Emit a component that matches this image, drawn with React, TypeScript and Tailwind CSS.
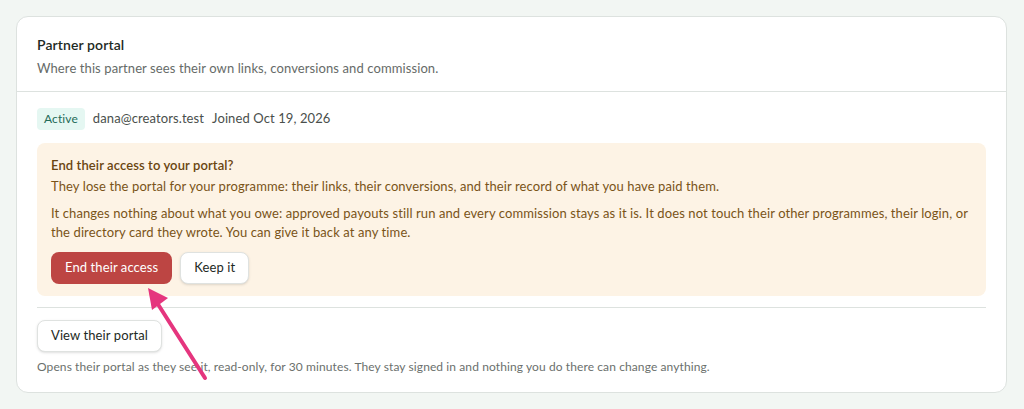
export default function App() {
  return (
    <div className="relative min-h-[409px] bg-[#f2f6f3] pt-[16px] pb-[16px] pl-[16px] pr-[17px] font-['Lato','Noto_Sans',sans-serif] tracking-[0.1px]">
      <div className="rounded-xl border border-[#dde2df] bg-white">
        {/* Header */}
        <div className="border-b border-[#dde2df] px-5 pt-[18px] pb-[14px]">
          <h2 className="text-[14px] font-semibold leading-[20px] text-[#1e2a24]">Partner portal</h2>
          <p className="mt-[4px] text-[13px] leading-[18px] text-[#666b68]">
            Where this partner sees their own links, conversions and commission.
          </p>
        </div>

        {/* Body */}
        <div className="px-5 pt-4 pb-[17px]">
          <div className="flex items-center text-[13px] text-[#4a4f4c]">
            <span className="rounded-[4px] bg-[#e5f7f2] px-[7px] py-[3px] text-[12px] leading-[16px] text-[#1f6b58]">
              Active
            </span>
            <span className="ml-[8px]">dana@creators.test</span>
            <span className="ml-[8px]">Joined Oct 19, 2026</span>
          </div>

          <div className="mt-[13px] rounded-lg bg-[#fdf3e5] px-[14px] pt-[12px] pb-[12px] text-[13px] text-[#7a5418]">
            <p className="font-semibold leading-[20px] text-[#6a4510]">End their access to your portal?</p>
            <p className="mt-[2px] leading-[19px]">
              They lose the portal for your programme: their links, their conversions, and their record of what you have paid them.
            </p>
            <p className="mt-[8px] leading-[19px]">
              It changes nothing about what you owe: approved payouts still run and every commission stays as it is. It does not touch their other programmes, their login, or the directory card they wrote. You can give it back at any time.
            </p>
            <div className="mt-[10px] flex gap-2">
              <button className="h-8 rounded-lg bg-[#bd4543] px-[14px] text-[13px] text-white">
                End their access
              </button>
              <button className="h-8 rounded-lg border border-[#dfe2e0] bg-white px-[13px] text-[13px] text-[#1e2a24] shadow-sm">
                Keep it
              </button>
            </div>
          </div>

          <div className="mt-[11px] border-t border-[#dde2df] pt-[12px]">
            <button className="h-8 rounded-lg border border-[#dfe2e0] bg-white px-[13px] text-[13px] text-[#1e2a24] shadow-sm">
              View their portal
            </button>
            <p className="mt-[7px] text-[12px] leading-[16px] text-[#6b706d]">
              Opens their portal as they see it, read-only, for 30 minutes. They stay signed in and nothing you do there can change anything.
            </p>
          </div>
        </div>
      </div>

      {/* annotation arrow */}
      <svg className="pointer-events-none absolute left-[140px] top-[282px]" width="80" height="100" viewBox="0 0 80 100">
        <line x1="65" y1="96" x2="14" y2="16" stroke="#e5357e" strokeWidth="4" strokeLinecap="round" />
        <polygon points="8,6 28,16 12,28" fill="#e5357e" />
      </svg>
    </div>
  )
}
